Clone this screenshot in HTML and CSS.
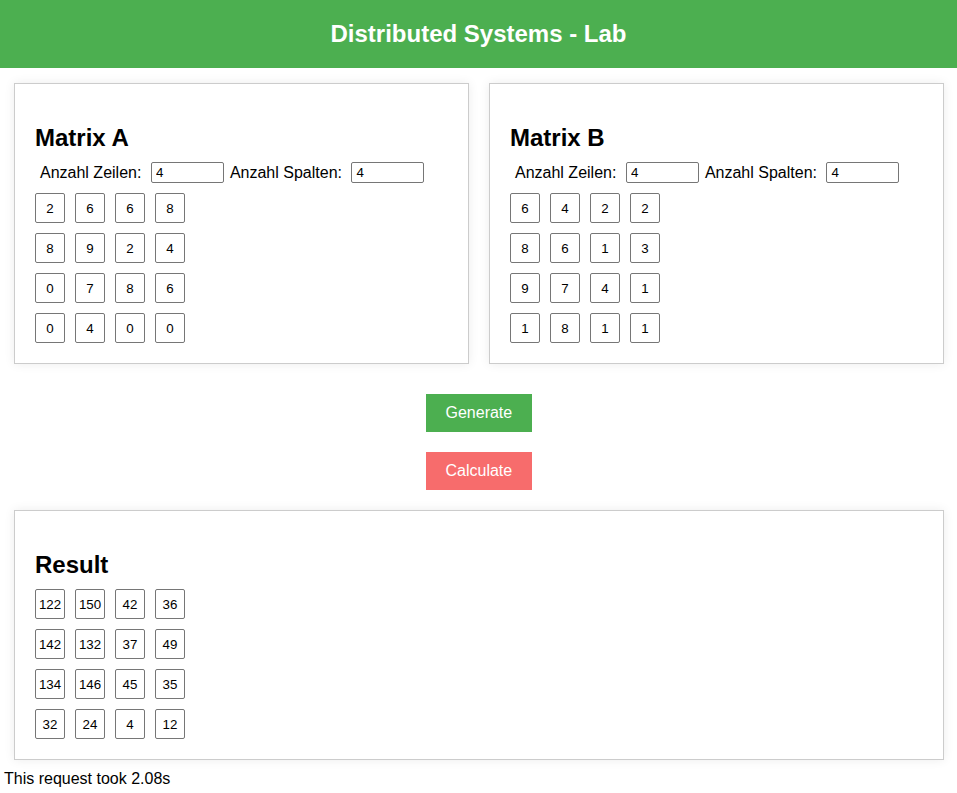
FILE: index.html
```html
<!DOCTYPE html>
<html>
<head>
<meta charset="utf-8">
<title>Distributed Systems - Lab</title>
<link rel="stylesheet" href="styles.css">
</head>
<body>
<header class="topbar"><h1 class="title">Distributed Systems - Lab</h1></header>
<main>
  <section class="matrices">
    <div class="card">
      <h2 class="card-title">Matrix A</h2>
      <div class="dims">
        <label class="dim-label">Anzahl Zeilen:</label><input class="dim-input" type="text" value="4">
        <label class="dim-label">Anzahl Spalten:</label><input class="dim-input" type="text" value="4">
      </div>
      <div class="grid">
        <input class="cell" value="2"><input class="cell" value="6"><input class="cell" value="6"><input class="cell" value="8">
        <input class="cell" value="8"><input class="cell" value="9"><input class="cell" value="2"><input class="cell" value="4">
        <input class="cell" value="0"><input class="cell" value="7"><input class="cell" value="8"><input class="cell" value="6">
        <input class="cell" value="0"><input class="cell" value="4"><input class="cell" value="0"><input class="cell" value="0">
      </div>
    </div>
    <div class="card">
      <h2 class="card-title">Matrix B</h2>
      <div class="dims">
        <label class="dim-label">Anzahl Zeilen:</label><input class="dim-input" type="text" value="4">
        <label class="dim-label">Anzahl Spalten:</label><input class="dim-input" type="text" value="4">
      </div>
      <div class="grid">
        <input class="cell" value="6"><input class="cell" value="4"><input class="cell" value="2"><input class="cell" value="2">
        <input class="cell" value="8"><input class="cell" value="6"><input class="cell" value="1"><input class="cell" value="3">
        <input class="cell" value="9"><input class="cell" value="7"><input class="cell" value="4"><input class="cell" value="1">
        <input class="cell" value="1"><input class="cell" value="8"><input class="cell" value="1"><input class="cell" value="1">
      </div>
    </div>
  </section>
  <div class="actions">
    <button class="btn btn-generate">Generate</button>
    <button class="btn btn-calculate">Calculate</button>
  </div>
  <section class="result-wrap">
    <div class="card">
      <h2 class="card-title">Result</h2>
      <div class="grid">
        <div class="cell">122</div><div class="cell">150</div><div class="cell">42</div><div class="cell">36</div>
        <div class="cell">142</div><div class="cell">132</div><div class="cell">37</div><div class="cell">49</div>
        <div class="cell">134</div><div class="cell">146</div><div class="cell">45</div><div class="cell">35</div>
        <div class="cell">32</div><div class="cell">24</div><div class="cell">4</div><div class="cell">12</div>
      </div>
    </div>
  </section>
  <p class="timing">This request took 2.08s</p>
</main>
</body>
</html>
```
FILE: styles.css
```css
* { box-sizing: border-box; }
html, body { margin: 0; padding: 0; background: #fff; }
body { font-family: "Liberation Sans", Arial, sans-serif; color: #000; font-size: 16px; }

.topbar {
  background: #4caf50;
  height: 68px;
  display: flex;
  align-items: center;
  justify-content: center;
}
.title {
  margin: 0;
  color: #fff;
  font-size: 24px;
  font-weight: bold;
}

.matrices {
  display: grid;
  grid-template-columns: 1fr 1fr;
  gap: 20px;
  padding: 15px 13px 0 14px;
}
.card {
  border: 1px solid #ccc;
  box-shadow: 0 0 10px rgba(0, 0, 0, 0.08);
  padding: 20px;
  background: #fff;
}
.card-title {
  font-size: 24px;
  font-weight: bold;
  margin: 19.92px 0 10.5px;
  line-height: 27.6px;
}
.dims {
  display: flex;
  align-items: center;
  height: 21px;
  margin-bottom: 10px;
}
.dim-label {
  font-size: 16px;
  margin-left: 5px;
  margin-right: 9.5px;
  white-space: nowrap;
}
.dim-input {
  width: 73px;
  height: 21px;
  border: 1px solid #767676;
  border-radius: 2px;
  font-family: "Liberation Sans", Arial, sans-serif;
  font-size: 13.33px;
  padding: 1px 4px;
  margin: 0 1px 0 0;
  color: #000;
}
.grid {
  display: grid;
  grid-template-columns: repeat(4, 30px);
  gap: 10px;
}
.cell {
  width: 30px;
  height: 30px;
  border: 1px solid #767676;
  border-radius: 2px;
  font-family: "Liberation Sans", Arial, sans-serif;
  font-size: 13.33px;
  text-align: center;
  padding: 0;
  margin: 0;
  color: #000;
  background: #fff;
  display: flex;
  align-items: center;
  justify-content: center;
}

.actions {
  display: flex;
  flex-direction: column;
  align-items: center;
  gap: 20px;
  margin-top: 30px;
}
.btn {
  border: none;
  color: #fff;
  font-family: "Liberation Sans", Arial, sans-serif;
  font-size: 16px;
  padding: 10px 20px;
  width: 106px;
  height: 38px;
  cursor: pointer;
}
.btn-generate { background: #4caf50; }
.btn-calculate { background: #f76c6c; }

.result-wrap {
  padding: 20px 13px 0 14px;
}
.timing {
  margin: 9px 0 0 4px;
  font-size: 16px;
  line-height: 20px;
}
```
